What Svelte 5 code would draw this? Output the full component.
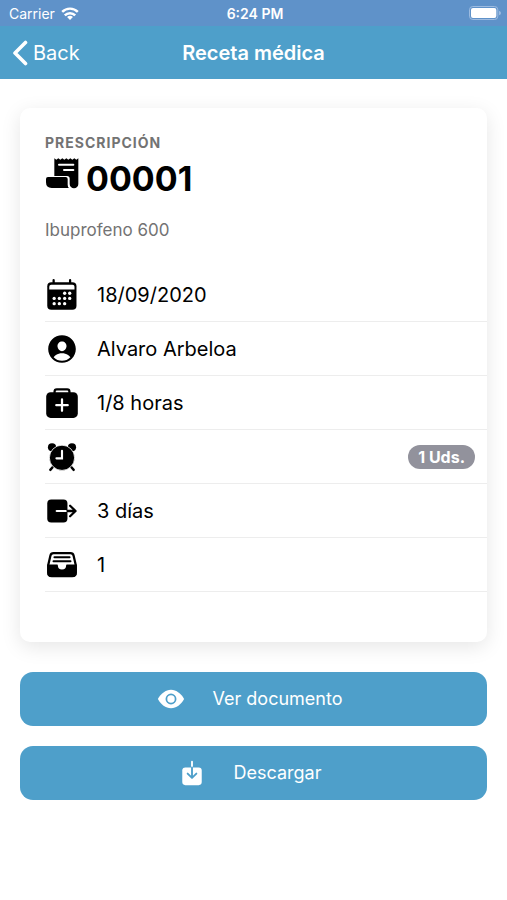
<script>
  const rows = [
    { icon: 'calendar', text: '18/09/2020' },
    { icon: 'person', text: 'Alvaro Arbeloa' },
    { icon: 'medkit', text: '1/8 horas' },
    { icon: 'alarm', text: '', badge: '1 Uds.' },
    { icon: 'exit', text: '3 días' },
    { icon: 'tray', text: '1' }
  ];
</script>

<div class="page">
  <div class="status">
    <div class="carrier">
      <span>Carrier</span>
      <svg class="wifi" viewBox="0 0 54 40" aria-hidden="true">
        <g fill="none" stroke="#fff" stroke-width="7.5">
          <path d="M3 15a34 34 0 0 1 48 0" />
          <path d="M11 26a22 22 0 0 1 32 0" />
        </g>
        <path d="M27 40l-9-9a13 13 0 0 1 18 0z" fill="#fff" />
      </svg>
    </div>
    <span class="time">6:24 PM</span>
    <svg class="battery" viewBox="0 0 96 42" aria-hidden="true">
      <rect x="1.5" y="1.5" width="85" height="39" rx="10" fill="none" stroke="#9dbbe0" stroke-width="3" />
      <rect x="6" y="6" width="76" height="30" rx="6" fill="#fff" />
      <path d="M90 14q6 2 6 7t-6 7z" fill="#9dbbe0" />
    </svg>
  </div>

  <header>
    <button class="back" type="button">
      <svg viewBox="0 0 16 26" aria-hidden="true">
        <path d="M13.500 2.500L3 13l10.500 10.500" fill="none" stroke="#fff" stroke-width="3.600" stroke-linecap="round" stroke-linejoin="round" />
      </svg>
      <span>Back</span>
    </button>
    <h1>Receta médica</h1>
  </header>

  <main>
    <section class="card">
      <div class="head">
        <p class="kicker">PRESCRIPCIÓN</p>
        <h2>
          <svg class="receipt" viewBox="0 0 108 102" aria-hidden="true">
            <path d="M28 57V4l6 4 6-4 6 4 6-4 6 4 6-4 6 4 6-4 6 4 6-4 6 4 6-4v77a13 13 0 0 1-26 0V65q0-8-8-8z" />
            <path d="M3 66q0-6 6-6h53q6 0 6 6v17q0 7 4 10H20Q3 93 3 76z" />
            <path d="M42 23h43M57 39h28" stroke="#fff" stroke-width="6" stroke-linecap="round" />
          </svg>
          <span>00001</span>
        </h2>
        <p class="drug">Ibuprofeno 600</p>
      </div>

      <ul>
        {#each rows as row}
          <li>
            <svg class="icon" viewBox="0 0 512 512" aria-hidden="true">
              {#if row.icon === 'calendar'}
                <path d="M130 32v60M378 32v60" stroke="#000" stroke-width="34" stroke-linecap="round" />
                <rect x="34" y="64" width="440" height="414" rx="62" />
                <path d="M64 172v-40q0-30 30-30h320q30 0 30 30v40z" fill="#fff" />
                <g fill="#fff">
                  <circle cx="296" cy="230" r="25" /><circle cx="372" cy="230" r="25" />
                  <circle cx="138" cy="308" r="25" /><circle cx="216" cy="308" r="25" />
                  <circle cx="296" cy="308" r="25" /><circle cx="372" cy="308" r="25" />
                  <circle cx="138" cy="386" r="25" /><circle cx="216" cy="386" r="25" />
                  <circle cx="296" cy="386" r="25" />
                </g>
              {:else if row.icon === 'person'}
                <path d="M256 48C141.310 48 48 141.310 48 256s93.310 208 208 208 208-93.310 208-208S370.690 48 256 48zm-50.220 116.820C218.450 151.390 236.280 144 256 144s37.390 7.440 50.110 20.940c12.890 13.680 19.160 32.060 17.680 51.820C320.830 256 290.430 288 256 288s-64.890-32-67.790-71.250c-1.470-19.920 4.790-38.360 17.570-51.930zM256 432a175.490 175.490 0 0 1-126-53.220 122.910 122.910 0 0 1 35.140-33.440C190.630 329 222.890 320 256 320s65.370 9 90.830 25.340A122.870 122.870 0 0 1 382 378.780 175.450 175.450 0 0 1 256 432z" />
              {:else if row.icon === 'medkit'}
                <path d="M144 110V86q0-34 34-34h156q34 0 34 34v24" fill="none" stroke="#000" stroke-width="34" />
                <rect x="18" y="94" width="476" height="386" rx="66" />
                <path d="M256 202v172M170 288h172" stroke="#fff" stroke-width="34" stroke-linecap="round" />
              {:else if row.icon === 'alarm'}
                <circle cx="106" cy="110" r="62" />
                <circle cx="406" cy="110" r="62" />
                <path d="M124 400l-44 50M388 400l44 50" stroke="#000" stroke-width="36" stroke-linecap="round" />
                <circle cx="256" cy="268" r="190" stroke="#fff" stroke-width="12" />
                <path d="M256 164v112h-84" fill="none" stroke="#fff" stroke-width="32" stroke-linecap="round" />
              {:else if row.icon === 'exit'}
                <rect x="34" y="82" width="304" height="346" rx="60" />
                <path d="M176 256h162" stroke="#fff" stroke-width="32" stroke-linecap="round" />
                <path d="M338 256h120M378 176l82 80-82 80" fill="none" stroke="#000" stroke-width="34" stroke-linecap="round" stroke-linejoin="round" />
              {:else}
                <path d="M48 260L82 112q8-36 46-36h256q38 0 46 36l34 148v110q0 54-54 54H102q-54 0-54-54z" fill="#fff" stroke="#000" stroke-width="34" />
                <path d="M36 250h148q8 0 10 12a62 62 0 0 0 124 0q2-12 10-12h148v126q0 62-62 62H98q-62 0-62-62z" />
                <path d="M142 138h228M128 200h256" stroke="#000" stroke-width="30" stroke-linecap="round" />
              {/if}
            </svg>
            <span class="label">{row.text}</span>
            {#if row.badge}<span class="badge">{row.badge}</span>{/if}
          </li>
        {/each}
      </ul>
    </section>

    <button class="action" type="button">
      <svg viewBox="0 0 512 512" aria-hidden="true">
        <path d="M16 256C70 158 158 86 256 86s186 72 240 170c-54 98-142 170-240 170S70 354 16 256z" fill="#fff" />
        <circle cx="256" cy="256" r="84" fill="none" stroke="#4e9fca" stroke-width="32" />
      </svg>
      <span>Ver documento</span>
    </button>
    <button class="action" type="button">
      <svg viewBox="0 0 512 512" aria-hidden="true">
        <rect x="78" y="156" width="356" height="322" rx="56" fill="#fff" />
        <path d="M256 48v108" stroke="#fff" stroke-width="34" stroke-linecap="round" />
        <path d="M256 156v172M176 266l80 80 80-80" fill="none" stroke="#4e9fca" stroke-width="34" stroke-linecap="round" stroke-linejoin="round" />
      </svg>
      <span>Descargar</span>
    </button>
  </main>
</div>

<style>
  :global(body) {
    background: #fff;
  }
  .page {
    font-family: Inter, "Liberation Sans", sans-serif;
    color: #000;
  }
  .status {
    display: grid;
    grid-template-columns: 1fr auto 1fr;
    align-items: center;
    height: 26px;
    padding: 0 6px 0 9px;
    background: #5f92c9;
    color: #fff;
    font-size: 14px;
  }
  .carrier {
    display: flex;
    align-items: center;
    gap: 6px;
  }
  .wifi {
    width: 18px;
    height: 13px;
  }
  .time {
    font-weight: 600;
  }
  .battery {
    justify-self: end;
    width: 32px;
    height: 14px;
  }
  header {
    display: grid;
    grid-template-columns: 1fr auto 1fr;
    align-items: center;
    height: 53px;
    padding: 0 12px;
    background: #4e9fca;
    color: #fff;
  }
  .back {
    display: flex;
    align-items: center;
    justify-self: start;
    gap: 5px;
    padding: 0;
    border: 0;
    background: none;
    color: #fff;
    font: 400 20px/24px Inter, "Liberation Sans", sans-serif;
  }
  .back svg {
    width: 16px;
    height: 26px;
  }
  h1 {
    margin: 0;
    font-size: 20px;
    line-height: 24px;
    font-weight: 600;
  }
  main {
    display: flex;
    flex-direction: column;
    gap: 20px;
    padding: 29px 20px;
  }
  .card {
    margin-bottom: 10px;
    padding: 25px 0 50px 25px;
    border-radius: 10px;
    background: #fff;
    box-shadow: 0 5px 20px rgba(0, 0, 0, 0.1);
  }
  .kicker {
    margin: 0;
    color: #737373;
    font-size: 14px;
    line-height: 20px;
    font-weight: 700;
    letter-spacing: 1px;
  }
  h2 {
    display: flex;
    align-items: flex-start;
    gap: 5px;
    margin: 4px 0 0;
    font-size: 34px;
    line-height: 44px;
    font-weight: 700;
  }
  .receipt {
    width: 36px;
    height: 34px;
  }
  .drug {
    margin: 19px 0 28px;
    color: #737373;
    font-size: 17px;
    line-height: 20px;
  }
  ul {
    margin: 0;
    padding: 0;
    list-style: none;
  }
  li {
    display: flex;
    align-items: center;
    box-sizing: border-box;
    height: 54px;
    padding-right: 12px;
    border-bottom: 1px solid #ededed;
  }
  .icon {
    flex: none;
    width: 34px;
    height: 34px;
    margin-right: 18px;
  }
  .label {
    flex: 1;
    font-size: 20px;
    line-height: 24px;
  }
  .badge {
    padding: 0 10px;
    border-radius: 12px;
    background: #92929c;
    color: #fff;
    font-size: 16px;
    line-height: 24px;
    font-weight: 700;
  }
  .action {
    display: flex;
    align-items: center;
    justify-content: center;
    gap: 28px;
    height: 54px;
    padding: 0 8px 0 0;
    border: 0;
    border-radius: 13px;
    background: #4e9fca;
    color: #fff;
    font: 400 18px/24px Inter, "Liberation Sans", sans-serif;
  }
  .action svg {
    width: 28px;
    height: 28px;
  }
</style>
